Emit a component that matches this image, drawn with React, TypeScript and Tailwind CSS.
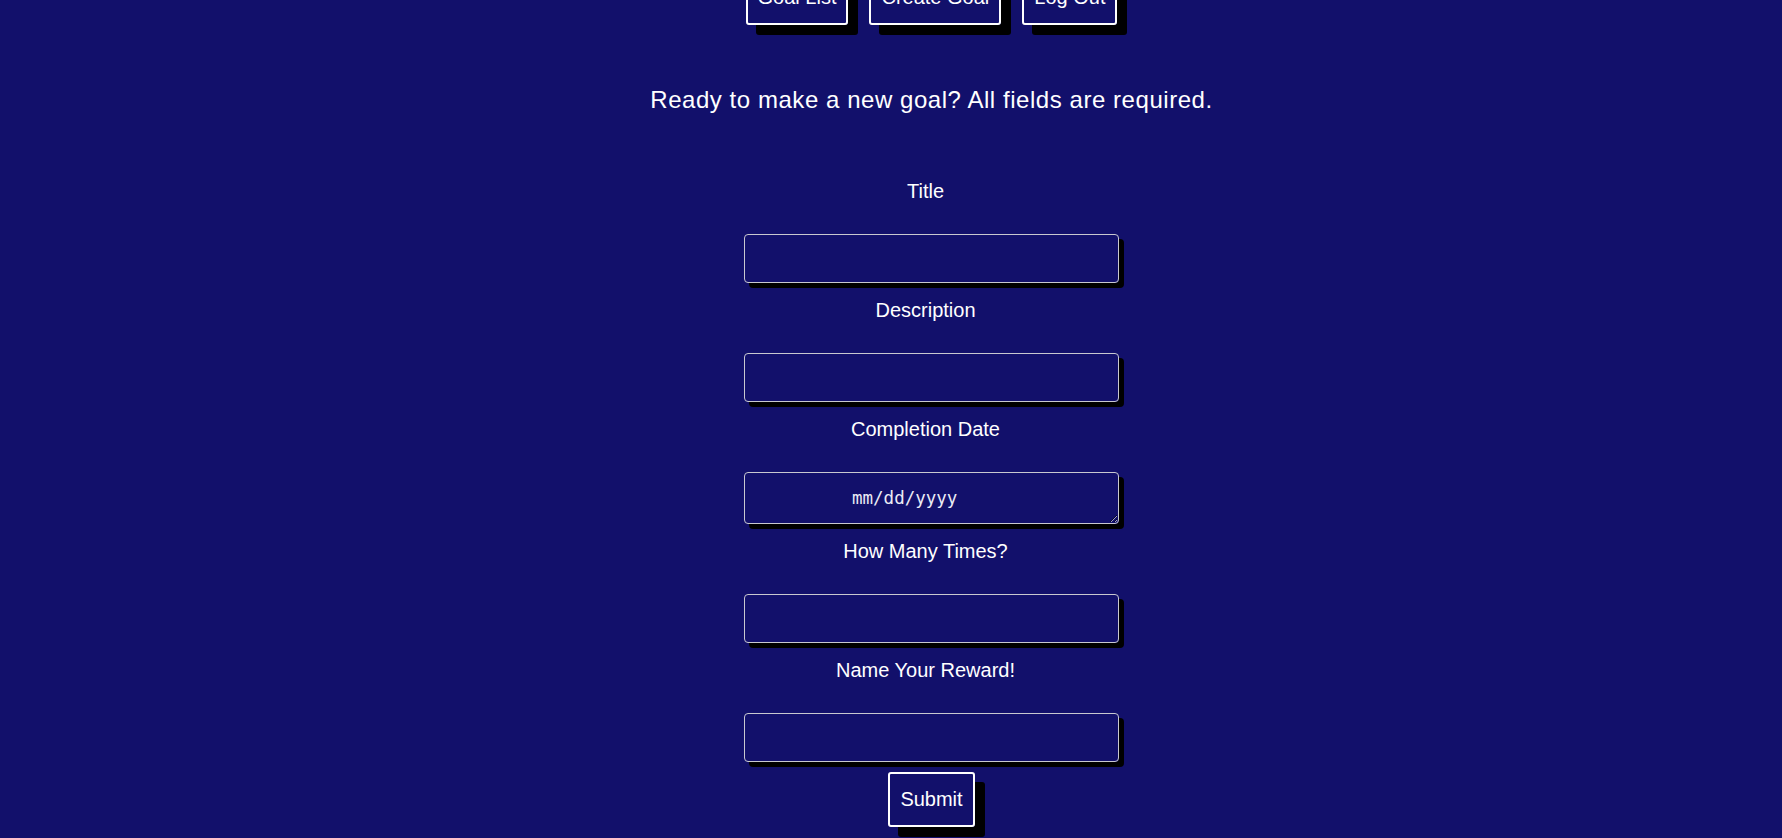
export default function App() {
  const fields = [
    { label: "Title", kind: "text" },
    { label: "Description", kind: "text" },
    { label: "Completion Date", kind: "date" },
    { label: "How Many Times?", kind: "text" },
    { label: "Name Your Reward!", kind: "text" },
  ];

  return (
    <div className="min-h-screen w-full overflow-hidden bg-[#12106b] font-['Liberation_Sans',Arial,sans-serif] text-white">
      <div className="flex flex-col items-center">
        {/* nav */}
        <nav className="-mt-[30px] ml-[81px] flex gap-[21px]">
          <button className="rounded-[3px] border-2 border-white px-[10px] py-[14px] text-[20px] leading-[23px] shadow-[10px_10px_0_0_#000]">
            Goal List
          </button>
          <button className="rounded-[3px] border-2 border-white px-[10px] py-[14px] text-[20px] leading-[23px] shadow-[10px_10px_0_0_#000]">
            Create Goal
          </button>
          <button className="rounded-[3px] border-2 border-white px-[10px] py-[14px] text-[20px] leading-[23px] shadow-[10px_10px_0_0_#000]">
            Log Out
          </button>
        </nav>

        <h2 className="ml-[81px] mt-[61px] text-[24px] leading-[28px] tracking-[0.55px]">
          Ready to make a new goal? All fields are required.
        </h2>

        <form className="mt-[66px] flex w-full flex-col items-center">
          {fields.map((f, i) => (
            <div key={f.label} className="flex w-full flex-col items-center">
              <label className={`ml-[69px] text-[20px] leading-[23px] ${i === 0 ? "" : "mt-[16px]"}`}>
                {f.label}
              </label>
              {f.kind === "date" ? (
                <textarea
                  placeholder="mm/dd/yyyy"
                  className="ml-[81px] mt-[31px] h-[52px] w-[375px] rounded-[4px] border border-[#c8c8d0] bg-transparent pl-[107px] pt-[15px] font-['DejaVu_Sans_Mono',monospace] text-[17.5px] leading-[20px] text-white shadow-[5px_5px_0_0_#000] outline-none placeholder:text-[#ebebf5]"
                />
              ) : (
                <input
                  type="text"
                  className="ml-[81px] mt-[31px] h-[49px] w-[375px] rounded-[4px] border border-[#c8c8d0] bg-transparent px-2 text-[18px] text-white shadow-[5px_5px_0_0_#000] outline-none"
                />
              )}
            </div>
          ))}
          <button
            type="button"
            className="ml-[81px] mt-[10px] rounded-[3px] border-2 border-white px-[10px] py-[14px] text-[20px] leading-[23px] shadow-[10px_10px_0_0_#000]"
          >
            Submit
          </button>
        </form>
      </div>
    </div>
  );
}
